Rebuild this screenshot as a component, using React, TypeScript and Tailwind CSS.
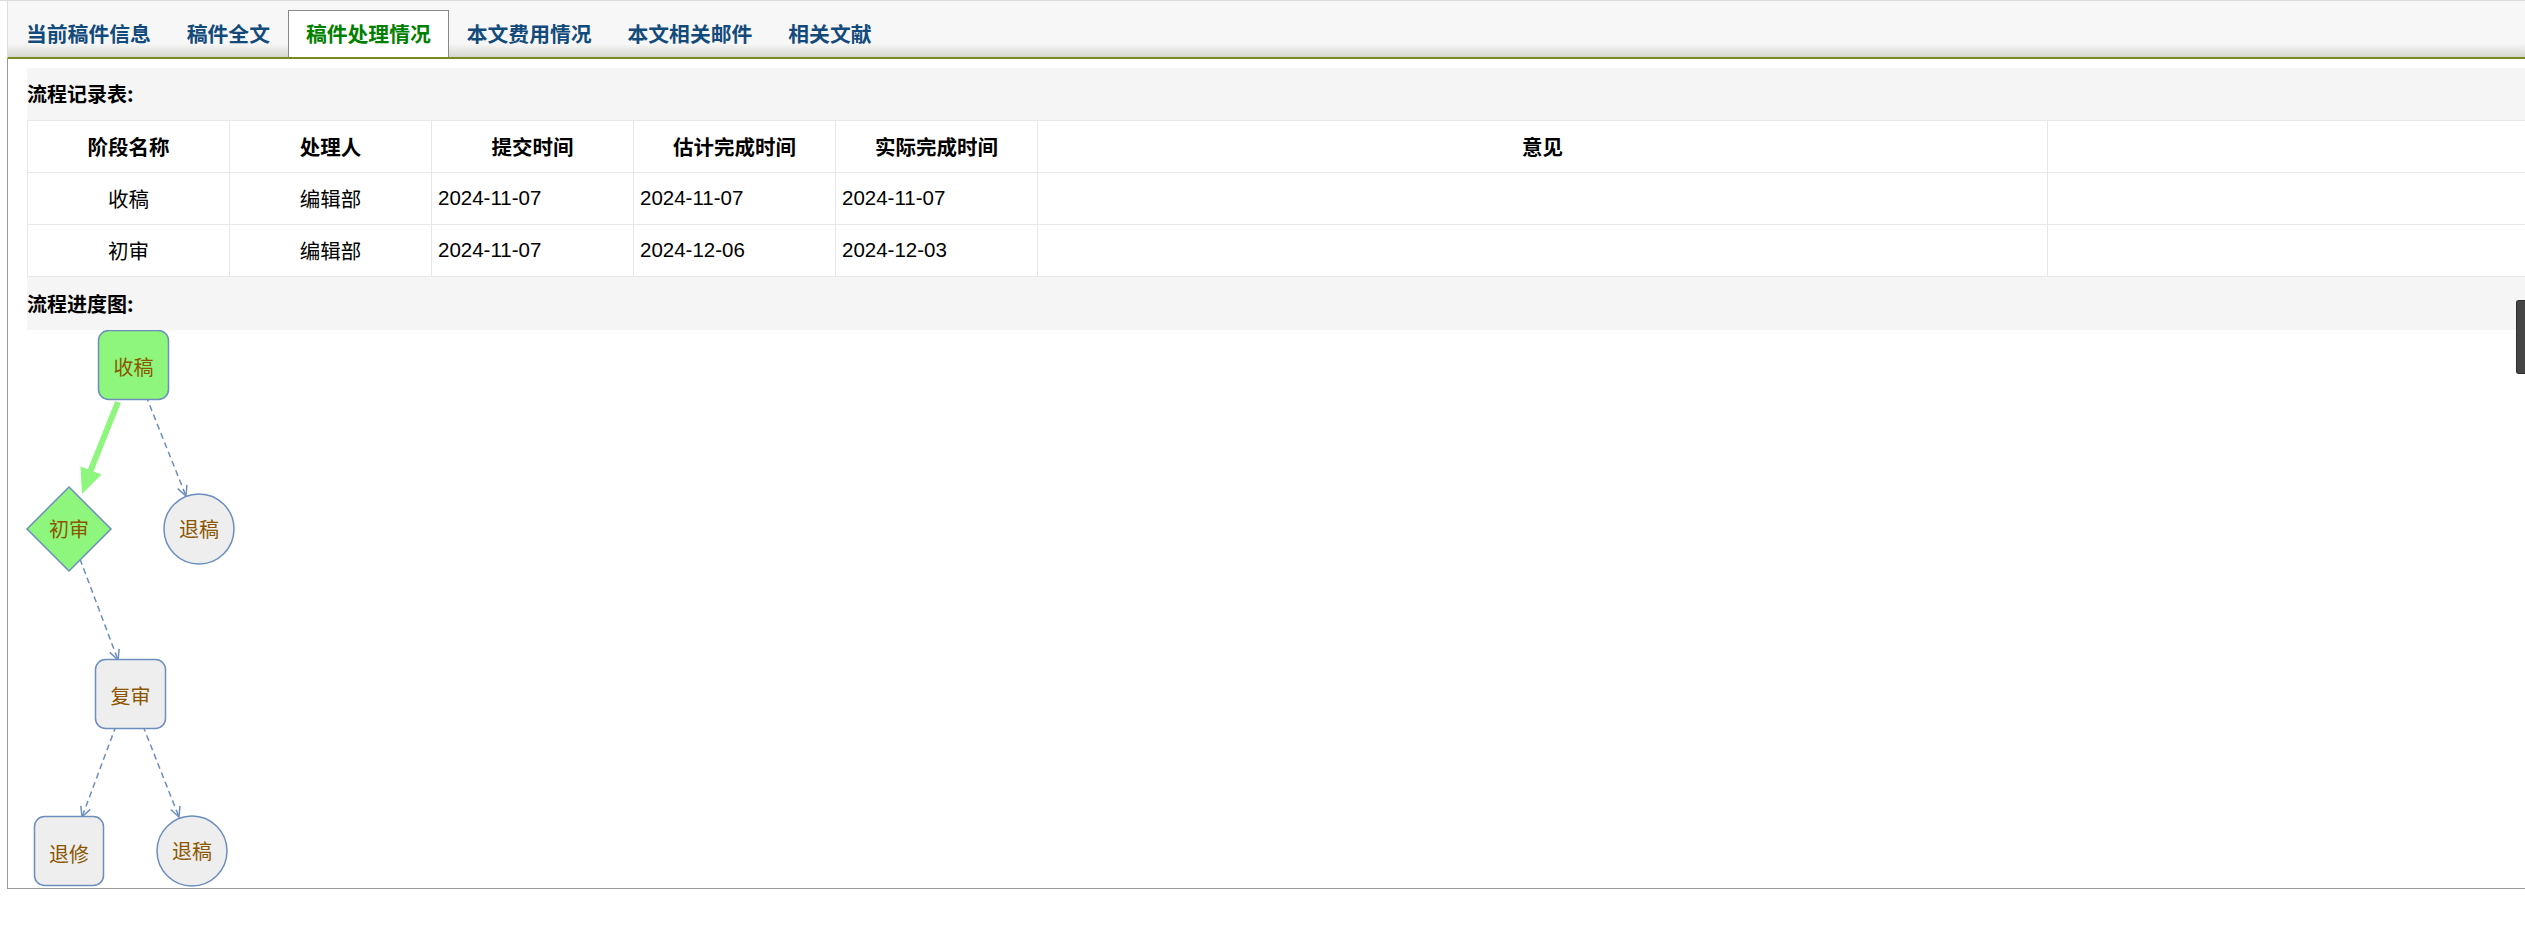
import type { ReactNode } from "react";

const cjk = "font-['Noto_Sans_CJK_SC',sans-serif]";
const latin = "font-['Liberation_Sans','Noto_Sans_CJK_SC',sans-serif]";

const tabs = ["当前稿件信息", "稿件全文", "稿件处理情况", "本文费用情况", "本文相关邮件", "相关文献"];
const activeTab = "稿件处理情况";

const records = [
  { stage: "收稿", person: "编辑部", submit: "2024-11-07", estimate: "2024-11-07", actual: "2024-11-07" },
  { stage: "初审", person: "编辑部", submit: "2024-11-07", estimate: "2024-12-06", actual: "2024-12-03" }
];

const BLUE = "#6c8ebf";
const GREEN = "#8ef67c";
const GRAY = "#eeeeee";
const BROWN = "#8c5600";

function SectionTitle({ children, className = "" }: { children: ReactNode; className?: string }) {
  return (
    <div className={`flex items-center bg-[#f5f5f5] text-[20px] font-bold text-black ${cjk} ${className}`}>
      {children}
    </div>
  );
}

function Label({ x, y, text }: { x: number; y: number; text: string }) {
  return (
    <text
      x={x}
      y={y}
      fill={BROWN}
      fontSize="20"
      fontWeight="400"
      fontFamily="'Noto Sans CJK SC', sans-serif"
      textAnchor="middle"
      dominantBaseline="central"
    >
      {text}
    </text>
  );
}

// dashed connector with an open chevron at (x2, y2)
function DashedArrow({ x1, y1, x2, y2 }: { x1: number; y1: number; x2: number; y2: number }) {
  const dx = x2 - x1;
  const dy = y2 - y1;
  const len = Math.hypot(dx, dy);
  const ux = dx / len;
  const uy = dy / len;
  const bx = x2 - ux * 10;
  const by = y2 - uy * 10;
  const px = -uy * 5;
  const py = ux * 5;
  return (
    <g stroke={BLUE} strokeWidth="1.5" fill="none">
      <line x1={x1} y1={y1} x2={x2} y2={y2} strokeDasharray="6 4" />
      <polyline points={`${bx + px},${by + py} ${x2},${y2} ${bx - px},${by - py}`} />
    </g>
  );
}

function FlowDiagram() {
  return (
    <svg width="300" height="557" viewBox="8 331 300 557" className="block">
      {/* 收稿 -> 初审 (done) */}
      <line x1="118" y1="403" x2="90" y2="473" stroke={GREEN} strokeWidth="6" />
      <polygon points="82,495 80.5,467.5 101.5,475.5" fill={GREEN} />

      <DashedArrow x1={146} y1={397} x2={186} y2={497} />
      <DashedArrow x1={80} y1={560} x2={118} y2={661} />
      <DashedArrow x1={116} y1={727} x2={82} y2={818} />
      <DashedArrow x1={143} y1={727} x2={179} y2={818} />

      <rect x="98.5" y="331.5" width="70" height="69" rx="10" fill={GREEN} stroke={BLUE} strokeWidth="1.5" />
      <Label x={133.5} y={367} text="收稿" />

      <polygon points="69,488 111,530 69,572 27,530" fill={GREEN} stroke={BLUE} strokeWidth="1.5" />
      <Label x={69} y={529} text="初审" />

      <circle cx="199" cy="530" r="35" fill={GRAY} stroke={BLUE} strokeWidth="1.5" />
      <Label x={199} y={529} text="退稿" />

      <rect x="95.5" y="660.5" width="70" height="69" rx="10" fill={GRAY} stroke={BLUE} strokeWidth="1.5" />
      <Label x={130.5} y={696} text="复审" />

      <rect x="34.5" y="817.5" width="69" height="69" rx="10" fill={GRAY} stroke={BLUE} strokeWidth="1.5" />
      <Label x={69} y={854} text="退修" />

      <circle cx="192" cy="852" r="35" fill={GRAY} stroke={BLUE} strokeWidth="1.5" />
      <Label x={192} y={851} text="退稿" />
    </svg>
  );
}

export default function App() {
  const cell = "border border-[#e8e8e8] h-[52px] p-0";
  return (
    <div className="relative h-[951px] w-[2525px] overflow-hidden border-t border-[#dcdcdc] bg-white">
      <div className="ml-[7px] w-[2600px]">
        {/* tab bar */}
        <div className="flex h-[58px] items-end border-b-2 border-l border-[#7a8a1c] border-l-[#dddddd] bg-[linear-gradient(to_bottom,#f7f7f7_0%,#f7f7f7_76%,#d6d6d0_100%)]">
          {tabs.map((tab) => {
            const active = tab === activeTab;
            return (
              <div
                key={tab}
                className={`flex h-[47px] items-center border border-b-0 px-[17px] text-[20.8px] font-bold ${cjk} ${
                  active ? "border-[#888888] bg-white text-[#008000]" : "border-transparent text-[#124a7c]"
                }`}
              >
                {tab}
              </div>
            );
          })}
        </div>

        {/* content */}
        <div className="h-[830px] border-b border-l border-[#999999] pl-[19px] pt-[9px]">
          <SectionTitle className="h-[52px]">流程记录表:</SectionTitle>
          <table className={`w-[2525px] table-fixed border-collapse text-[20.5px] text-black ${cjk}`}>
            <colgroup>
              <col className="w-[202px]" />
              <col className="w-[202px]" />
              <col className="w-[202px]" />
              <col className="w-[202px]" />
              <col className="w-[202px]" />
              <col className="w-[1010px]" />
              <col className="w-[505px]" />
            </colgroup>
            <thead>
              <tr className="font-bold">
                <th className={cell}>阶段名称</th>
                <th className={cell}>处理人</th>
                <th className={cell}>提交时间</th>
                <th className={cell}>估计完成时间</th>
                <th className={cell}>实际完成时间</th>
                <th className={cell}>意见</th>
                <th className={cell}></th>
              </tr>
            </thead>
            <tbody>
              {records.map((r) => (
                <tr key={r.stage}>
                  <td className={`${cell} text-center`}>{r.stage}</td>
                  <td className={`${cell} text-center`}>{r.person}</td>
                  <td className={`${cell} pl-[6px] ${latin}`}>{r.submit}</td>
                  <td className={`${cell} pl-[6px] ${latin}`}>{r.estimate}</td>
                  <td className={`${cell} pl-[6px] ${latin}`}>{r.actual}</td>
                  <td className={cell}></td>
                  <td className={cell}></td>
                </tr>
              ))}
            </tbody>
          </table>
          <SectionTitle className="h-[53px]">流程进度图:</SectionTitle>
          <div className="-ml-[19px]">
            <FlowDiagram />
          </div>
        </div>
      </div>

      {/* floating side handle */}
      <div className="absolute right-0 top-[299px] h-[74px] w-[9px] rounded-l-[3px] border border-r-0 border-[#2e2e2e] bg-[#454545]" />
    </div>
  );
}
